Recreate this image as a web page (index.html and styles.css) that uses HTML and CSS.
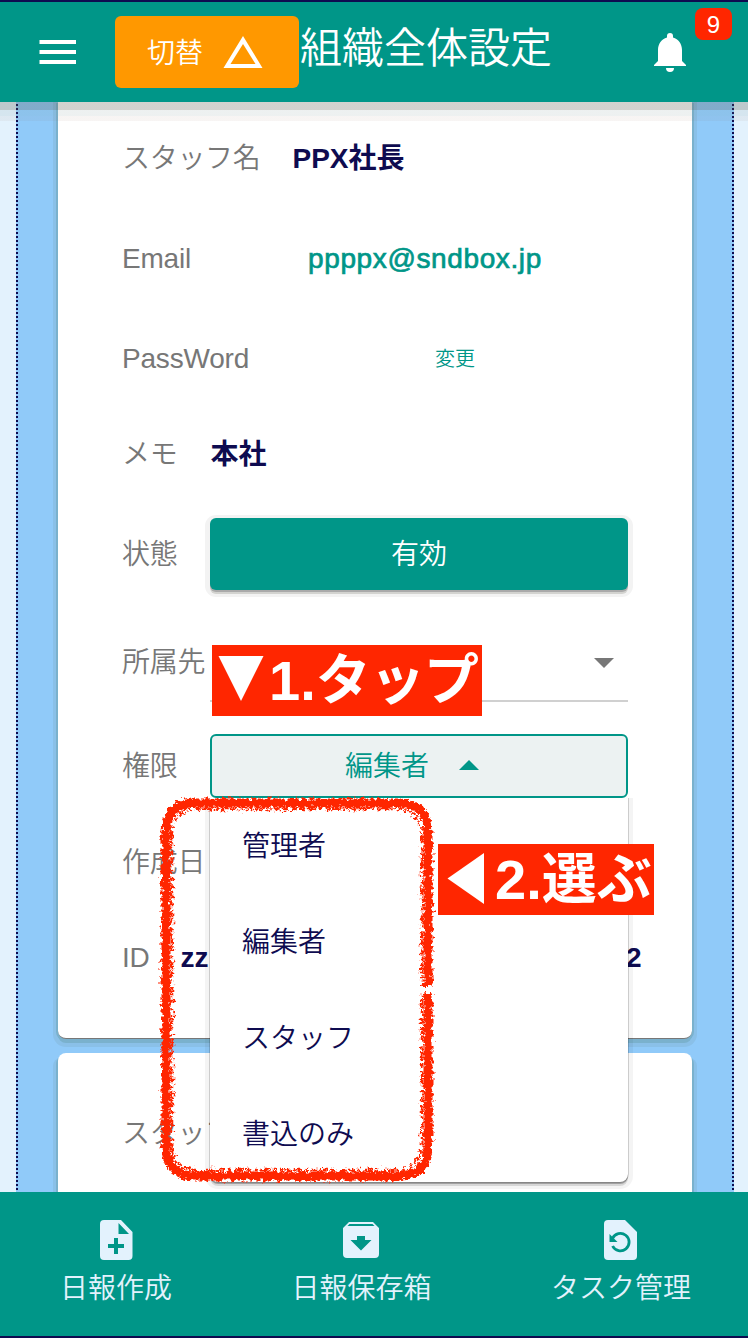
FILE: index.html
```html
<!DOCTYPE html>
<html lang="ja">
<head>
<meta charset="utf-8">
<title>組織全体設定</title>
<link rel="stylesheet" href="styles.css">
</head>
<body>
<div class="app">
  <header class="topbar">
    <svg class="menu-icon" width="38" height="24" viewBox="0 0 38 24"><path d="M.5 0h36.500v4H.5zM.5 10h36.500v4H.5zM.5 20h36.500v4H.5z" fill="#fff"/></svg>
    <button class="switch"><span>切替</span><svg width="40" height="32" viewBox="0 0 40 32"><path fill="#fff" fill-rule="evenodd" d="M20 0 39.500 32H.5zM20 8 7.500 28H32.500z"/></svg></button>
    <h1 class="title">組織全体設定</h1>
    <svg class="bell" width="32" height="40" viewBox="0 0 32 40"><path fill="#fff" d="M16 1a3 3 0 0 1 3 3v1.500C24.500 7 28 12 28 18v11l4 4v1H0v-1l4-4V18C4 12 7.500 7 13 5.500V4a3 3 0 0 1 3-3zM12 36h8a4 4 0 0 1-8 0z"/></svg>
    <span class="badge">9</span>
  </header>

  <main class="content">
    <div class="panel">
      <section class="card card-first">
        <div class="row h100"><span class="label">スタッフ名</span><b class="value name">PPX社長</b></div>
        <div class="row h101"><span class="label latin">Email</span><span class="email">ppppx@sndbox.jp</span></div>
        <div class="row h99"><span class="label latin">PassWord</span><a class="change">変更</a></div>
        <div class="row h92"><span class="label">メモ</span><b class="value memo">本社</b></div>
        <div class="row h108"><span class="label fixed">状態</span><button class="status"><span>有効</span></button></div>
        <div class="row h108"><span class="label fixed">所属先</span><div class="select"><i class="caret"></i></div></div>
        <div class="row h100"><span class="label fixed">権限</span>
          <div class="role">
            <button class="role-button"><span>編集者</span><i class="caret up"></i></button>
            <ul class="menu"><li>管理者</li><li>編集者</li><li>スタッフ</li><li>書込のみ</li></ul>
          </div>
        </div>
        <div class="row h92"><span class="label">作成日</span></div>
        <div class="row h100"><span class="label latin">ID</span><b class="value id-start">zz</b><b class="value id-end">2</b></div>
      </section>
      <section class="card card-next">
        <div class="row h160"><span class="label">スタッフ</span></div>
      </section>
    </div>
    <div class="topshade"></div>
    <svg class="brush" width="290" height="400" viewBox="0 0 290 400">
      <defs>
        <filter id="crayon" x="-5%" y="-5%" width="110%" height="110%">
          <feTurbulence type="fractalNoise" baseFrequency=".28" numOctaves="3" seed="7" result="n"/>
          <feDisplacementMap in="SourceGraphic" in2="n" scale="9" xChannelSelector="R" yChannelSelector="G"/>
        </filter>
      </defs>
      <g filter="url(#crayon)" fill="none" stroke="#ff2600">
        <path stroke-width="9" d="M279 204V356Q279 387 249 387H46Q17 387 17 356V43Q17 14 46 14H249Q279 14 279 43V197"/>
        <path stroke-width="2.500" stroke-dasharray="5 2 9 3 3 4" d="M273 204V352Q273 381 245 381H49Q23 381 23 352V46Q23 20 49 20H245Q273 20 273 46V197"/>
      </g>
    </svg>
    <div class="callout tap"><svg width="57" height="71" viewBox="0 0 57 71"><path d="M6.500 11h45L29 56z" fill="#fff"/></svg><span class="num">1.</span><span class="kana">タップ</span></div>
    <div class="callout choose"><svg width="57" height="71" viewBox="0 0 57 71"><path d="M9.500 34.500 46 9v51z" fill="#fff"/></svg><span class="num">2.</span><span class="kana">選ぶ</span></div>
  </main>

  <nav class="bottombar">
    <a class="tab create"><svg width="33" height="40" viewBox="0 0 33 40"><path fill="#e3f2fd" fill-rule="evenodd" d="M4 0h17l11.500 12v24a4 4 0 0 1-4 4H4a4 4 0 0 1-4-4V4a4 4 0 0 1 4-4zM18.500 3v11H29zM14 18v6H8v4h6v6h4v-6h6v-4h-6v-6z"/></svg><span>日報作成</span></a>
    <a class="tab archive"><svg width="36" height="40" viewBox="0 0 36 40"><path fill="#e3f2fd" fill-rule="evenodd" d="M6 2h24l6 6v26a4 4 0 0 1-4 4H4a4 4 0 0 1-4-4V8zM6.500 4 4.500 6h27l-2-2zM14 16v4H7.500L18 30.500 28.500 20H22v-4z"/></svg><span>日報保存箱</span></a>
    <a class="tab task"><svg width="33" height="40" viewBox="0 0 33 40"><path fill="#e3f2fd" d="M4 0h17l12 12v24a4 4 0 0 1-4 4H4a4 4 0 0 1-4-4V4a4 4 0 0 1 4-4z"/><path d="M8.500 18.500A8.700 8.700 0 1 1 8.600 26" fill="none" stroke="#009688" stroke-width="2.800"/><path d="M5.500 14v8h8z" fill="#009688"/></svg><span>タスク管理</span></a>
  </nav>
</div>
</body>
</html>
```
FILE: styles.css
```css
* { box-sizing: border-box; }
body { margin: 0; font-family: "Liberation Sans", "Noto Sans CJK JP", sans-serif; font-size: 28px; font-weight: 350; color: #0e0b50; }
button { font: inherit; border: 0; padding: 0; }
svg { display: block; flex: none; }
.app { width: 748px; height: 1338px; display: flex; flex-direction: column; overflow: hidden; border-top: 2px solid #0e0b50; border-bottom: 2px solid #0e0b50; }
.topbar { position: relative; flex: none; height: 100px; background: #009688; color: #fff; display: flex; align-items: center; padding-left: 39px; }
.menu-icon { margin-right: 38px; }
.switch { width: 184px; height: 72px; border-radius: 6px; background: #ff9800; color: #fff; display: flex; align-items: center; gap: 20px; padding-left: 32px; }
.switch span { padding-bottom: 2px; }
.title { margin: 0 0 6px 1px; width: 354px; font-size: 42px; font-weight: 350; line-height: 60px; white-space: nowrap; }
.badge { position: absolute; left: 695px; top: 6px; width: 37px; height: 32px; border-radius: 8px; background: #ff2600; font-size: 24px; line-height: 34px; text-align: center; }
.content { position: relative; flex: none; height: 1090px; background: #e3f2fd; overflow: hidden; padding: 0 14px 0 16px; }
.panel { height: 1090px; padding: 0 42px; background: repeating-linear-gradient(#0e0b50 0 2px, #90caf9 2px 4px) 0 2px / 2px 100% no-repeat, repeating-linear-gradient(#0e0b50 0 2px, #90caf9 2px 4px) 100% 2px / 2px 100% no-repeat, #90caf9; }
.card { position: relative; background: #fff; border-radius: 8px; padding: 0 64px; }
.card-first { z-index: 2; padding-top: 6px; height: 937px; border-radius: 0 0 8px 8px; border-bottom: 1px solid #777; box-shadow: -2px 1px 0 #7ab1cd, 2px 1px 0 #7ab1cd, 0 4px 0 #7ab1cd, 0 3px 0 5px #8ac0e8; }
.card-next { z-index: 3; margin-top: 14px; height: 160px; box-shadow: -2px 3px 0 #7ab1cd, 2px 3px 0 #7ab1cd, -5px 5px 0 #8ac0e8, 5px 5px 0 #8ac0e8; }
.card-next { z-index: 1; }
.row { display: flex; align-items: center; position: relative; }
.h92 { height: 92px; } .h99 { height: 99px; } .h100 { height: 100px; } .h101 { height: 101px; } .h108 { height: 108px; } .h160 { height: 160px; }
.label { color: #777; white-space: nowrap; letter-spacing: -.3px; padding-bottom: 4px; }
.label.latin { letter-spacing: -.2px; padding-bottom: 0; }
.fixed { width: 88px; flex: none; }
.value { font-weight: 700; padding-bottom: 4px; }
.name { margin-left: 32px; }
.memo { margin-left: 33px; }
.email { position: absolute; left: 186px; color: #009688; -webkit-text-stroke: .7px #009688; letter-spacing: .62px; }
.change { position: absolute; left: 313px; color: #009688; font-size: 20px; padding-bottom: 2px; }
.status { width: 418px; height: 72px; border-radius: 6px; background: #009688; color: #fff; box-shadow: 0 2px 0 #aaa, 0 4px 0 #d3d3d0, 0 2px 0 5px #f3f3f3; }
.status span, .role-button span { display: block; padding-bottom: 4px; }
.select { width: 418px; height: 80px; border-bottom: 2px solid #d0d0d0; position: relative; display: flex; align-items: center; justify-content: flex-end; padding: 4px 14px 0 0; }
.caret { width: 0; height: 0; border: 10px solid transparent; border-top-color: #777; border-bottom: 0; }
.caret.up { border-top: 0; border-bottom: 10px solid #009688; margin: 0 0 2px 30px; }
.role { position: relative; }
.role-button { width: 418px; height: 64px; border: 2px solid #009688; border-radius: 6px; background: #ecf2f2; color: #009688; display: flex; align-items: center; justify-content: center; padding-right: 14px; }
.menu { position: absolute; z-index: 2; left: 0; top: 64px; width: 418px; height: 384px; margin: 0; padding: 1px 0 0; list-style: none; background: #fff; border-radius: 0 0 8px 8px; box-shadow: 0 0 0 1px rgba(0,0,0,.16), 0 2px 0 rgba(0,0,0,.25), 0 4px 0 rgba(0,0,0,.12), 0 2px 0 5px rgba(0,0,0,.045); clip-path: inset(0 -10px -10px -10px); }
.menu li { height: 96px; line-height: 96px; padding-left: 32px; }
.id-start { margin-left: 31px; padding-bottom: 0; }
.id-end { position: absolute; left: 504px; padding-bottom: 0; }
.topshade { position: absolute; z-index: 2; inset: 0 0 auto 0; height: 19px; background: linear-gradient(rgba(90,90,75,.27) 0 8px, rgba(120,145,145,.13) 8px 14px, rgba(130,80,60,.06) 14px); }
.brush { position: absolute; z-index: 3; left: 149px; top: 687px; }
.callout { position: absolute; z-index: 4; display: flex; align-items: center; height: 71px; background: #ff2600; color: #fff; font-size: 56px; font-weight: 700; line-height: 71px; white-space: nowrap; font-family: "Noto Sans CJK JP", sans-serif; }
.num { font-family: "Liberation Sans", sans-serif; }
.kana { font-size: 55px; padding-bottom: 10px; }
.tap { left: 212px; top: 543px; width: 270px; }
.tap .kana { letter-spacing: -.8px; }
.choose { left: 438px; top: 742px; width: 216px; }
.bottombar { position: relative; flex: none; height: 144px; background: #009688; color: #e3f2fd; display: flex; padding: 28px 57px 0 60px; justify-content: space-between; }
.tab { display: flex; flex-direction: column; align-items: center; gap: 9px; line-height: 40px; white-space: nowrap; }
```
